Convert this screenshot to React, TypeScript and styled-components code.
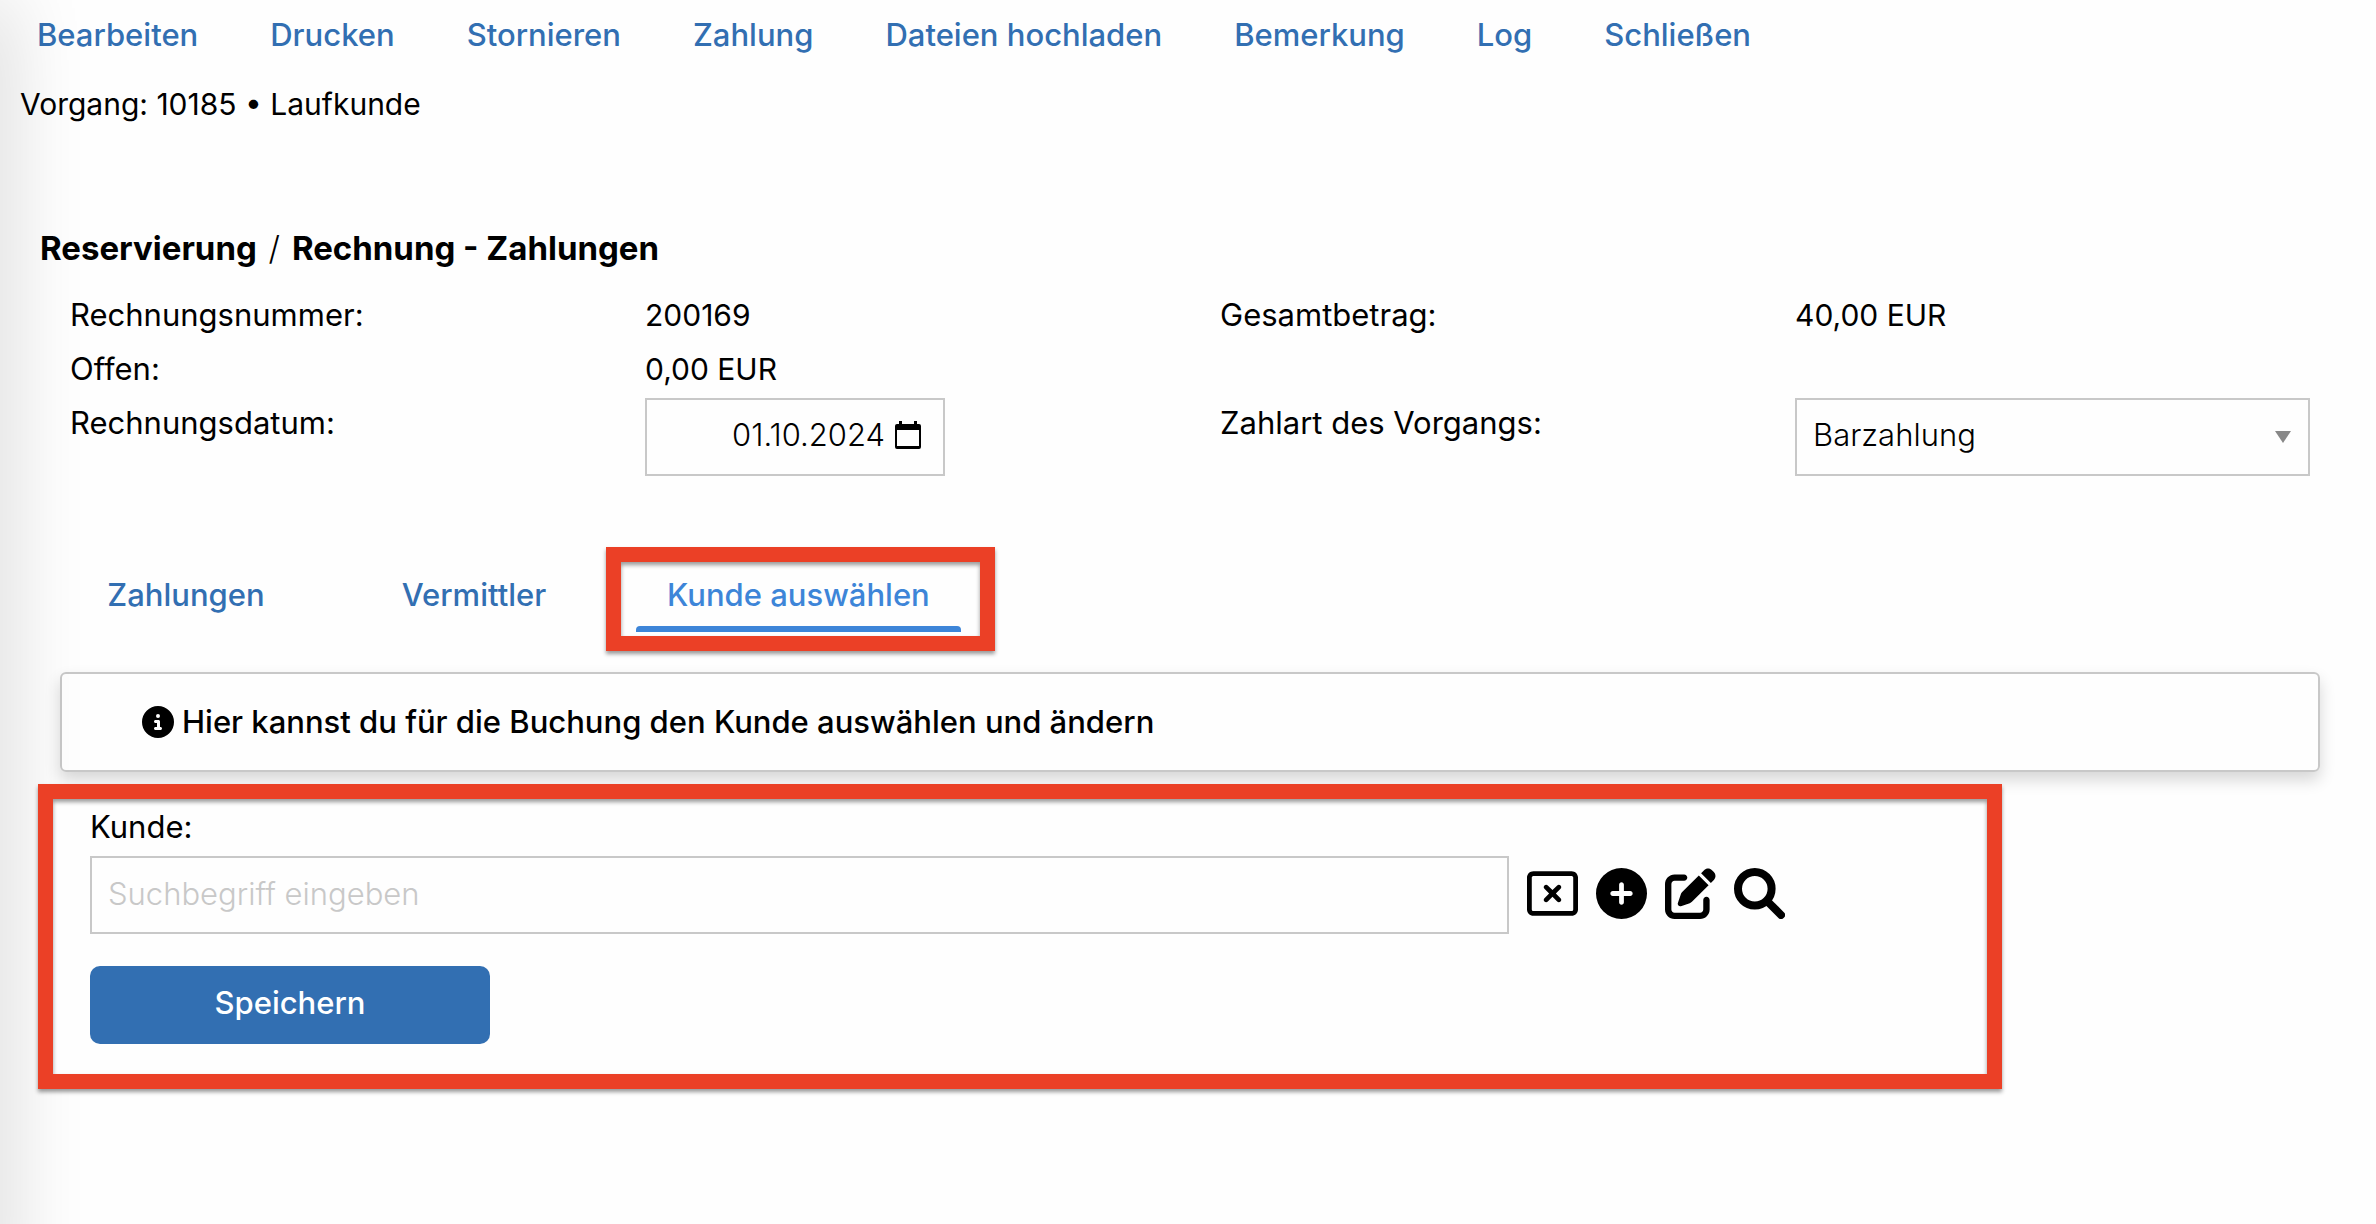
import React, { useState } from "react";
import styled, { createGlobalStyle } from "styled-components";
import {
  FaCircleInfo,
  FaCirclePlus,
  FaPenToSquare,
  FaRegRectangleXmark,
} from "react-icons/fa6";

const color = {
  text: "#000000",
  link: "#326fb2",
  active: "#3d85d8",
  line: "#c8c8c8",
  mark: "#eb4026",
  page: "#fefefe",
};

const markShadow = "0 3px 4px rgba(0, 0, 0, 0.4)";

const GlobalStyle = createGlobalStyle`
  * {
    box-sizing: border-box;
  }
  body {
    margin: 0;
    background: ${color.page};
    color: ${color.text};
    font-family: Inter, "Liberation Sans", sans-serif;
    font-size: 31px;
    line-height: 40px;
  }
  button, input, select {
    font: inherit;
    color: inherit;
  }
`;

/* The shadow that the closed side panel casts on the page's left edge. */
const Page = styled.div`
  position: relative;
  min-height: 100vh;
  overflow: hidden;

  &::before {
    content: "";
    position: absolute;
    top: 0;
    bottom: -80px;
    left: -40px;
    width: 40px;
    box-shadow: 0 0 80px rgba(0, 0, 0, 0.22);
  }
`;

const Toolbar = styled.nav`
  display: flex;
  flex-wrap: wrap;
  gap: 0 72px;
  padding: 15px 37px 13px;
`;

const ToolbarLink = styled.a`
  color: ${color.link};
  font-weight: 500;
  text-decoration: none;
`;

const CaseLine = styled.p`
  margin: 0;
  padding: 16px 20px 0;
  font-size: 30px;
`;

const Title = styled.h1`
  margin: 0;
  padding: 104px 40px 0;
  font-size: 33px;
  line-height: 40px;
  font-weight: 700;
`;

const Slash = styled.span`
  margin: 0 4px;
  font-weight: 300;
`;

const Details = styled.div`
  display: grid;
  grid-template-columns: repeat(4, 1fr);
  column-gap: 60px;
  padding: 20px 66px 0 70px;
  line-height: 54px;
`;

const Value = styled.span<{ $wide?: boolean }>`
  grid-column: ${(p) => (p.$wide ? "span 3" : "auto")};
  font-size: 30px;
`;

const Control = styled.div<{ $width?: string }>`
  display: flex;
  align-items: center;
  width: ${(p) => p.$width ?? "100%"};
  height: 78px;
  margin-top: 2px;
  padding-bottom: 4px;
  border: 2px solid ${color.line};
  font-weight: 300;
`;

const DateInput = styled.input`
  flex: 1;
  min-width: 0;
  padding: 0 10px 0 0;
  border: 0;
  background: none;
  text-align: right;
`;

const PickerButton = styled.button`
  display: flex;
  margin-right: 22px;
  padding: 0;
  border: 0;
  background: none;
`;

const SelectControl = styled(Control)`
  position: relative;
`;

const Select = styled.select`
  flex: 1;
  padding: 0 50px 0 16px;
  border: 0;
  background: none;
  appearance: none;
`;

const SelectArrow = styled.svg`
  position: absolute;
  top: 31px;
  right: 17px;
  pointer-events: none;
`;

const Tabs = styled.div`
  display: flex;
  gap: 36px;
  padding: 99px 60px 34px;
`;

const Tab = styled.button<{ $active?: boolean }>`
  position: relative;
  min-width: 252px;
  padding: 0 31px 11px;
  border: 0;
  background: none;
  color: ${(p) => (p.$active ? color.active : color.link)};
  font-weight: 500;
  line-height: 40px;

  &::after {
    content: "";
    display: block;
    height: 6px;
    margin: 11px -31px -11px;
    border-radius: 4px 4px 0 0;
    background: ${(p) => (p.$active ? color.active : "transparent")};
  }
`;

const TabSlot = styled.div`
  position: relative;
  padding-bottom: 6px;
`;

/* Red frame drawn around the tab that the reader should click. */
const TabMark = styled.span`
  position: absolute;
  inset: -28px -34px -13px -30px;
  border: 15px solid ${color.mark};
  box-shadow: ${markShadow}, inset ${markShadow};
  pointer-events: none;
`;

const Hint = styled.div`
  display: flex;
  align-items: center;
  gap: 8px;
  margin: 0 56px 0 60px;
  padding: 28px 80px;
  border: 2px solid ${color.line};
  border-radius: 6px;
  box-shadow: 0 8px 16px rgba(0, 0, 0, 0.16);
  font-weight: 500;
`;

const CustomerForm = styled.form`
  position: relative;
  max-width: 1964px;
  margin: 12px 38px 0;
  padding: 8px 37px 30px;
  border: 15px solid ${color.mark};
  background: ${color.page};
  box-shadow: ${markShadow}, inset ${markShadow};
`;

const FieldLabel = styled.label`
  display: block;
`;

const SearchRow = styled.div`
  display: flex;
  align-items: center;
  gap: 18px;
  margin-top: 9px;
`;

const SearchInput = styled.input`
  flex: 0 1 1419px;
  min-width: 0;
  height: 78px;
  padding: 0 16px 4px;
  border: 2px solid ${color.line};
  background: ${color.page};
  font-weight: 300;

  &::placeholder {
    color: ${color.line};
    opacity: 1;
  }
`;

const IconButton = styled.button`
  display: flex;
  padding: 0 0 4px;
  border: 0;
  background: none;
  font-size: 51px;
`;

const SaveButton = styled.button`
  display: block;
  width: 400px;
  height: 78px;
  margin-top: 32px;
  padding: 0 0 4px;
  border: 0;
  border-radius: 10px;
  background: ${color.link};
  color: #ffffff;
  font-weight: 500;
`;

function CalendarIcon() {
  return (
    <svg width="26" height="28" viewBox="0 0 26 28" aria-hidden="true">
      <path
        fillRule="evenodd"
        d="M4 0h3v3h12V0h3v3h2a2 2 0 0 1 2 2v21a2 2 0 0 1-2 2H2a2 2 0 0 1-2-2V5a2 2 0 0 1 2-2h2zM2 9v16h22V9z"
      />
    </svg>
  );
}

function SearchIcon() {
  return (
    <svg
      width="1em"
      height="1em"
      viewBox="0 0 51 51"
      fill="none"
      stroke="currentColor"
      strokeWidth="8"
      strokeLinecap="round"
      aria-hidden="true"
    >
      <circle cx="20.8" cy="20.8" r="16.8" />
      <path d="M34 34l13 13" />
    </svg>
  );
}

const actions = [
  "Bearbeiten",
  "Drucken",
  "Stornieren",
  "Zahlung",
  "Dateien hochladen",
  "Bemerkung",
  "Log",
  "Schließen",
];

const tabs = ["Zahlungen", "Vermittler", "Kunde auswählen"];

const searchTools = [
  { label: "Leeren", Icon: FaRegRectangleXmark },
  { label: "Hinzufügen", Icon: FaCirclePlus },
  { label: "Ändern", Icon: FaPenToSquare },
  { label: "Suchen", Icon: SearchIcon },
];

export default function App() {
  const [active, setActive] = useState("Kunde auswählen");
  const [date, setDate] = useState("01.10.2024");

  return (
    <Page>
      <GlobalStyle />
      <Toolbar>
        {actions.map((name) => (
          <ToolbarLink key={name} href="#">
            {name}
          </ToolbarLink>
        ))}
      </Toolbar>
      <CaseLine>Vorgang: 10185 • Laufkunde</CaseLine>
      <Title>
        Reservierung <Slash>/</Slash> Rechnung - Zahlungen
      </Title>

      <Details>
        <span>Rechnungsnummer:</span>
        <Value>200169</Value>
        <span>Gesamtbetrag:</span>
        <Value>40,00 EUR</Value>
        <span>Offen:</span>
        <Value $wide>0,00 EUR</Value>
        <label htmlFor="date">Rechnungsdatum:</label>
        <Control $width="300px">
          <DateInput
            id="date"
            value={date}
            onChange={(e) => setDate(e.target.value)}
          />
          <PickerButton type="button" aria-label="Kalender">
            <CalendarIcon />
          </PickerButton>
        </Control>
        <label htmlFor="method">Zahlart des Vorgangs:</label>
        <SelectControl>
          <Select id="method">
            <option>Barzahlung</option>
          </Select>
          <SelectArrow width="16" height="12" viewBox="0 0 16 12">
            <path d="M0 0h16L8 12z" fill="#888888" />
          </SelectArrow>
        </SelectControl>
      </Details>

      <Tabs role="tablist">
        {tabs.map((name) => (
          <TabSlot key={name}>
            <Tab
              role="tab"
              type="button"
              aria-selected={name === active}
              $active={name === active}
              onClick={() => setActive(name)}
            >
              {name}
            </Tab>
            {name === "Kunde auswählen" && <TabMark />}
          </TabSlot>
        ))}
      </Tabs>

      <Hint>
        <FaCircleInfo size={32} />
        <span>Hier kannst du für die Buchung den Kunde auswählen und ändern</span>
      </Hint>

      <CustomerForm onSubmit={(e) => e.preventDefault()}>
        <FieldLabel htmlFor="customer">Kunde:</FieldLabel>
        <SearchRow>
          <SearchInput id="customer" placeholder="Suchbegriff eingeben" />
          {searchTools.map(({ label, Icon }) => (
            <IconButton key={label} type="button" aria-label={label}>
              <Icon />
            </IconButton>
          ))}
        </SearchRow>
        <SaveButton type="submit">Speichern</SaveButton>
      </CustomerForm>
    </Page>
  );
}
